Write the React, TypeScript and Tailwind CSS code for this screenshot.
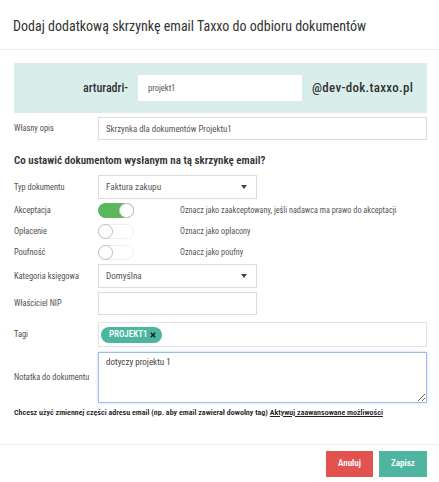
function Toggle({ on }: { on: boolean }) {
  return on ? (
    <div className="relative h-[15px] w-[36px] rounded-full bg-[#5cb85c]">
      <div className="absolute right-0 top-0 h-[15px] w-[15px] rounded-full border border-[#c8c8c8] bg-white" />
    </div>
  ) : (
    <div className="relative h-[15px] w-[36px] rounded-full border border-[#efefef] bg-white">
      <div className="absolute -left-px -top-px h-[15px] w-[15px] rounded-full border border-[#bdbdbd] bg-white" />
    </div>
  );
}

function Caret() {
  return (
    <svg width="6" height="4" viewBox="0 0 6 4" className="mr-[9px]">
      <path d="M0 0 L6 0 L3 4 Z" fill="#444" />
    </svg>
  );
}

function Label({ children }: { children: React.ReactNode }) {
  return <div className="w-[84px] shrink-0 text-[8.4px] text-[#505050] whitespace-nowrap">{children}</div>;
}

export default function App() {
  return (
    <div className="w-[439px] h-[482px] bg-white font-['Roboto_Condensed',sans-serif] text-[#555] flex flex-col">
      <div className="h-[50px] shrink-0 border-b border-[#ececec] flex items-center px-[13px] pt-[3px]">
        <h1 className="text-[14px] text-[#333] whitespace-nowrap">
          Dodaj dodatkową skrzynkę email Taxxo do odbioru dokumentów
        </h1>
      </div>

      <div className="flex flex-col px-[14px] pr-[12px] pt-[13px]">
        <div className="h-[50px] bg-[#d9eeeb] flex items-center">
          <div className="w-[114px] text-right text-[12px] font-medium text-[#333]">arturadri-</div>
          <input
            defaultValue="projekt1"
            className="ml-[10px] h-[26px] w-[164px] bg-white px-[10px] text-[8.5px] text-[#555] outline-none"
          />
          <div className="ml-[10px] text-[13px] tracking-[0.3px] font-medium text-[#333]">@dev-dok.taxxo.pl</div>
        </div>

        <div className="mt-[4px] flex items-center">
          <Label>Własny opis</Label>
          <input
            defaultValue="Skrzynka dla dokumentów Projektu1"
            className="h-[23px] flex-1 border border-[#dcdcdc] px-[7px] text-[8.8px] text-[#555] outline-none"
          />
        </div>

        <h2 className="mt-[13px] h-[16px] flex items-center text-[11px] font-semibold text-[#333] whitespace-nowrap">
          Co ustawić dokumentom wysłanym na tą skrzynkę email?
        </h2>

        <div className="mt-[6px] flex items-center">
          <Label>Typ dokumentu</Label>
          <div className="h-[24px] w-[159px] border border-[#dcdcdc] flex items-center justify-between pl-[7px]">
            <span className="text-[9.2px]">Faktura zakupu</span>
            <Caret />
          </div>
        </div>

        <div className="mt-[4px] flex flex-col gap-[6px]">
          {[
            { l: "Akceptacja", d: "Oznacz jako zaakceptowany, jeśli nadawca ma prawo do akceptacji", on: true },
            { l: "Opłacenie", d: "Oznacz jako opłacony", on: false },
            { l: "Poufność", d: "Oznacz jako poufny", on: false },
          ].map((r) => (
            <div key={r.l} className="h-[15px] flex items-center">
              <Label>{r.l}</Label>
              <Toggle on={r.on} />
              <div className="ml-[46px] text-[8.2px] whitespace-nowrap">{r.d}</div>
            </div>
          ))}
        </div>

        <div className="mt-[4px] flex items-center">
          <Label>Kategoria księgowa</Label>
          <div className="h-[24px] w-[159px] border border-[#dcdcdc] flex items-center justify-between pl-[7px]">
            <span className="text-[9.2px]">Domyślna</span>
            <Caret />
          </div>
        </div>

        <div className="mt-[4px] flex items-center">
          <Label>Właściciel NIP</Label>
          <input className="h-[23px] w-[159px] border border-[#dcdcdc] px-[7px] text-[9px] outline-none" />
        </div>

        <div className="mt-[7px] flex items-center">
          <Label>Tagi</Label>
          <div className="h-[25px] flex-1 border border-[#e3e3e3] flex items-center pl-[2px]">
            <span className="h-[16px] w-[61px] rounded-full bg-[#4db6a0] flex items-center pl-[8px] gap-[3px] text-[9px] font-medium text-white">
              PROJEKT1
              <svg width="6" height="6" viewBox="0 0 6 6">
                <path d="M0.8 0.8 L5.2 5.2 M5.2 0.8 L0.8 5.2" stroke="#222" strokeWidth="1.6" />
              </svg>
            </span>
          </div>
        </div>

        <div className="mt-[5px] flex items-center">
          <Label>Notatka do dokumentu</Label>
          <textarea
            defaultValue="dotyczy projektu 1"
            className="h-[51px] flex-1 border border-[#9dbde9] shadow-[0_0_3px_#c5d8f3] px-[7px] pt-[3px] text-[9px] text-[#444] outline-none"
          />
        </div>

        <div className="mt-[4px] text-[8px] font-semibold text-[#222] whitespace-nowrap">
          Chcesz użyć zmiennej części adresu email (np. aby email zawierał dowolny tag){" "}
          <span className="underline">Aktywuj zaawansowane możliwości</span>
        </div>
      </div>

      <div className="mt-auto border-t border-[#ececec] h-[38px] flex items-start justify-end gap-[6px] pr-[12px] pt-[6px]">
        <button className="h-[26px] w-[47px] bg-[#e2534f] text-[9px] font-semibold text-white">Anuluj</button>
        <button className="h-[26px] w-[48px] bg-[#4fb5a0] text-[9px] font-semibold text-white">Zapisz</button>
      </div>
    </div>
  );
}
